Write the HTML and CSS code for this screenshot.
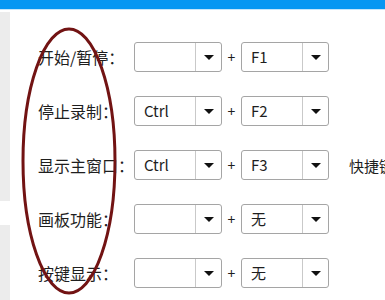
FILE: index.html
```html
<!DOCTYPE html>
<html lang="zh-CN">
<head>
    <meta charset="UTF-8">
    <title>快捷键设置</title>
    <link rel="stylesheet" href="styles.css">
</head>
<body>
    <div class="topbar"></div>
    <div class="main">
        <div class="side">
            <div class="side-block first"></div>
            <div class="side-block"></div>
        </div>
        <div class="form">
            <div class="row">
                <span class="label">开始/暂停：</span>
                <div class="combo"><span class="val"></span><span class="btn"><i class="arrow"></i></span></div>
                <span class="plus">+</span>
                <div class="combo"><span class="val">F1</span><span class="btn"><i class="arrow"></i></span></div>
            </div>
            <div class="row">
                <span class="label">停止录制：</span>
                <div class="combo"><span class="val">Ctrl</span><span class="btn"><i class="arrow"></i></span></div>
                <span class="plus">+</span>
                <div class="combo"><span class="val">F2</span><span class="btn"><i class="arrow"></i></span></div>
            </div>
            <div class="row">
                <span class="label">显示主窗口：</span>
                <div class="combo"><span class="val">Ctrl</span><span class="btn"><i class="arrow"></i></span></div>
                <span class="plus">+</span>
                <div class="combo"><span class="val">F3</span><span class="btn"><i class="arrow"></i></span></div>
                <span class="note">快捷键</span>
            </div>
            <div class="row">
                <span class="label">画板功能：</span>
                <div class="combo"><span class="val"></span><span class="btn"><i class="arrow"></i></span></div>
                <span class="plus">+</span>
                <div class="combo"><span class="val">无</span><span class="btn"><i class="arrow"></i></span></div>
            </div>
            <div class="row">
                <span class="label">按键显示：</span>
                <div class="combo"><span class="val"></span><span class="btn"><i class="arrow"></i></span></div>
                <span class="plus">+</span>
                <div class="combo"><span class="val">无</span><span class="btn"><i class="arrow"></i></span></div>
            </div>
        </div>
    </div>

    <!-- hand-drawn mark around the labels -->
    <svg class="mark" width="385" height="300" viewBox="0 0 385 300">
        <ellipse cx="69" cy="161" rx="46" ry="132" fill="none" stroke="#721313" stroke-width="3"/>
    </svg>
</body>
</html>
```

FILE: styles.css
```css
body {
    margin: 0;
    width: 385px;
    height: 300px;
    overflow: hidden;
    background: #fff;
    font-family: "Noto Sans CJK SC", "Noto Sans", sans-serif;
    color: #1e1e1e;
    position: relative;
}
.topbar {
    height: 9px;
    background: #0797f2;
    border-bottom: 1px solid #c6e6fb;
}
.main {
    display: flex;
    height: 290px;
    overflow: hidden;
}
.side {
    width: 10px;
    flex-shrink: 0;
    display: flex;
    flex-direction: column;
    gap: 24px;
    padding-top: 2px;
}
.side-block {
    background: #ececec;
    height: 80px;
}
.side-block.first {
    height: 201px;
}
.form {
    flex-shrink: 0;
    display: flex;
    flex-direction: column;
    gap: 24px;
    padding: 32px 0 0 28px;
}
.row {
    display: flex;
    align-items: center;
    height: 30px;
    white-space: nowrap;
}
.row > * {
    flex-shrink: 0;
}
.label {
    width: 96px;
    font-size: 16px;
}
.combo {
    width: 86px;
    height: 28px;
    border: 1px solid #a5a5a5;
    border-radius: 3px;
    display: flex;
    background: #fff;
}
.val {
    flex: 1;
    padding-left: 9px;
    font-size: 15px;
    line-height: 28px;
}
.btn {
    width: 25px;
    border-left: 1px solid #c9c9c9;
    display: flex;
    align-items: center;
    justify-content: center;
}
.arrow {
    width: 0;
    height: 0;
    border-left: 5px solid transparent;
    border-right: 5px solid transparent;
    border-top: 5px solid #111;
}
.plus {
    width: 19px;
    text-align: center;
    font-size: 14px;
}
.note {
    margin-left: 20px;
    font-size: 15px;
}
.mark {
    position: absolute;
    left: 0;
    top: 0;
}
```
